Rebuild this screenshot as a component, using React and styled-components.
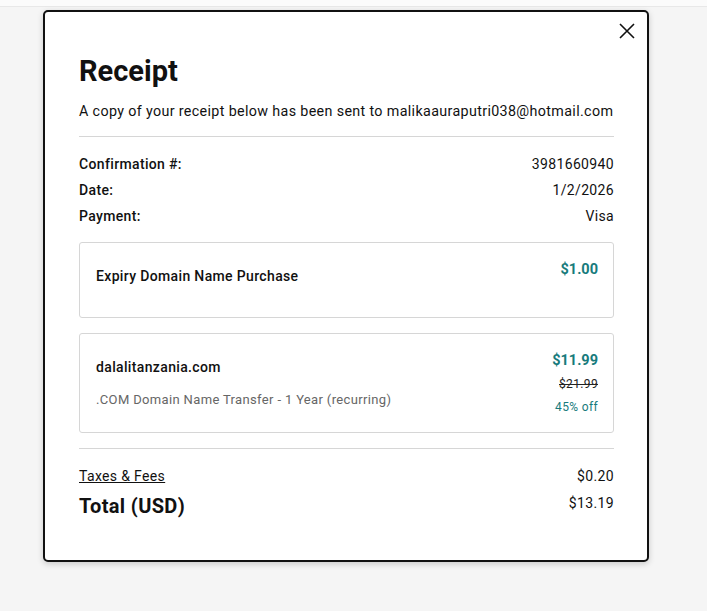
import React from 'react'
import styled, { createGlobalStyle } from 'styled-components'

const GlobalStyle = createGlobalStyle`
  html, body {
    margin: 0;
    padding: 0;
    background: #f5f5f5;
    font-family: Roboto, "Liberation Sans", Arial, sans-serif;
    color: #111;
    letter-spacing: 0.35px;
  }
`

const Page = styled.div`
  min-height: 611px;
  background: #f5f5f5;
`

const TopStrip = styled.div`
  height: 6px;
  background: #fbfbfb;
  border-bottom: 1px solid #e8e8e8;
`

const Modal = styled.div`
  position: relative;
  box-sizing: border-box;
  width: 606px;
  margin: 3px 0 0 43px;
  background: #fff;
  border: 2px solid #111;
  border-radius: 5px;
  box-shadow: 0 2px 6px rgba(0, 0, 0, 0.18);
  padding: 40px 33px 41px 34px;
`

const Close = styled.button`
  position: absolute;
  top: 9px;
  right: 10px;
  width: 20px;
  height: 20px;
  padding: 0;
  border: none;
  background: none;
  cursor: pointer;
  display: flex;
  align-items: center;
  justify-content: center;
`

const Title = styled.h1`
  margin: 0;
  font-size: 29px;
  font-weight: 700;
  line-height: 38px;
  letter-spacing: 0;
`

const Note = styled.p`
  margin: 11px 0 0;
  font-size: 14.3px;
  line-height: 20px;
`

const Divider = styled.hr`
  margin: ${p => p.$top}px 0 ${p => p.$bottom}px;
  border: none;
  border-top: 1px solid #d6d6d6;
`

const InfoRow = styled.div`
  display: flex;
  justify-content: space-between;
  font-size: 14px;
  line-height: 26px;
`

const Label = styled.span`
  font-weight: 500;
`

const Card = styled.div`
  display: flex;
  justify-content: space-between;
  border: 1px solid #d6d6d6;
  border-radius: 3px;
  padding: ${p => p.$pad};
  margin-top: ${p => p.$top}px;
  min-height: ${p => p.$h}px;
  box-sizing: border-box;
`

const ItemInfo = styled.div`
  display: flex;
  flex-direction: column;
  gap: 14px;
`

const ItemName = styled.div`
  font-size: 14px;
  font-weight: 500;
  line-height: 20px;
`

const ItemDesc = styled.div`
  font-size: 13px;
  color: #666;
  line-height: 18px;
`

const Prices = styled.div`
  display: flex;
  flex-direction: column;
  align-items: flex-end;
  gap: 5px;
`

const Price = styled.div`
  color: #177b7c;
  font-size: 14.5px;
  font-weight: 700;
  line-height: 18px;
  letter-spacing: 0;
`

const OldPrice = styled.s`
  font-size: 12px;
  color: #222;
  line-height: 18px;
`

const Discount = styled.div`
  font-size: 12px;
  color: #177b7c;
  line-height: 18px;
`

const TotalsRow = styled.div`
  display: flex;
  justify-content: space-between;
  align-items: flex-start;
  font-size: 14px;
  line-height: 20px;
  margin-top: ${p => p.$top}px;
`

const FeesLink = styled.a`
  color: #111;
  text-decoration: underline;
  cursor: pointer;
`

const TotalLabel = styled.span`
  font-size: 20px;
  font-weight: 700;
  line-height: 26px;
`

const App = () => {
  return (
    <Page>
      <GlobalStyle />
      <TopStrip />
      <Modal>
        <Close aria-label="Close">
          <svg width="16" height="16" viewBox="0 0 16 16">
            <path d="M1 1 L15 15 M15 1 L1 15" stroke="#111" strokeWidth="1.6" fill="none" />
          </svg>
        </Close>
        <Title>Receipt</Title>
        <Note>A copy of your receipt below has been sent to malikaauraputri038@hotmail.com</Note>
        <Divider $top={15} $bottom={14} />
        <InfoRow><Label>Confirmation #:</Label><span>3981660940</span></InfoRow>
        <InfoRow><Label>Date:</Label><span>1/2/2026</span></InfoRow>
        <InfoRow><Label>Payment:</Label><span>Visa</span></InfoRow>
        <Card $top={13} $h={76} $pad="18px 15px 16px 16px">
          <ItemName style={{ marginTop: 5 }}>Expiry Domain Name Purchase</ItemName>
          <Price>$1.00</Price>
        </Card>
        <Card $top={15} $h={100} $pad="18px 15px 16px 16px">
          <ItemInfo style={{ paddingTop: 5 }}>
            <ItemName>dalalitanzania.com</ItemName>
            <ItemDesc>.COM Domain Name Transfer - 1 Year (recurring)</ItemDesc>
          </ItemInfo>
          <Prices>
            <Price>$11.99</Price>
            <OldPrice>$21.99</OldPrice>
            <Discount>45% off</Discount>
          </Prices>
        </Card>
        <Divider $top={15} $bottom={0} />
        <TotalsRow $top={17}>
          <FeesLink>Taxes &amp; Fees</FeesLink>
          <span>$0.20</span>
        </TotalsRow>
        <TotalsRow $top={7}>
          <TotalLabel>Total (USD)</TotalLabel>
          <span>$13.19</span>
        </TotalsRow>
      </Modal>
    </Page>
  )
}

export default App
